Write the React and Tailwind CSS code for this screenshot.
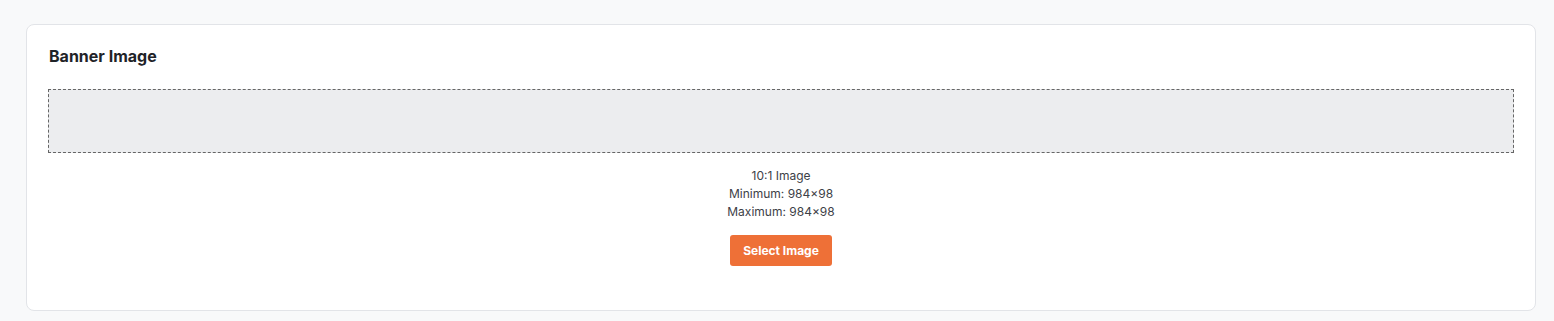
import React from 'react';

const BannerImageCard = () => {
    return (
        <div className="bg-white border border-[#e2e4e8] rounded-lg px-[21px] pt-[20px] pb-[44px]">
            <h2 className="text-[16px] leading-[22px] font-bold text-[#1f2328] pl-[1px]">Banner Image</h2>
            <div className="mt-[22px] h-[64px] bg-[#ecedef] border border-dashed border-[#666666]" />
            <div className="mt-[14px] flex flex-col items-center text-[12px] leading-[18px] text-[#3d4147]">
                <span>10:1 Image</span>
                <span>Minimum: 984×98</span>
                <span>Maximum: 984×98</span>
                <button className="mt-[14px] h-[31px] w-[102px] rounded-[3px] bg-[#ee7037] text-white text-[12px] font-bold">
                    Select Image
                </button>
            </div>
        </div>
    );
};

export default function App() {
    return (
        <div className="min-h-screen bg-[#f8f9fa] pt-[24px] pl-[26px] pr-[18px] pb-[10px]" style={{ fontFamily: 'Inter, "Liberation Sans", sans-serif' }}>
            <BannerImageCard />
        </div>
    );
}
